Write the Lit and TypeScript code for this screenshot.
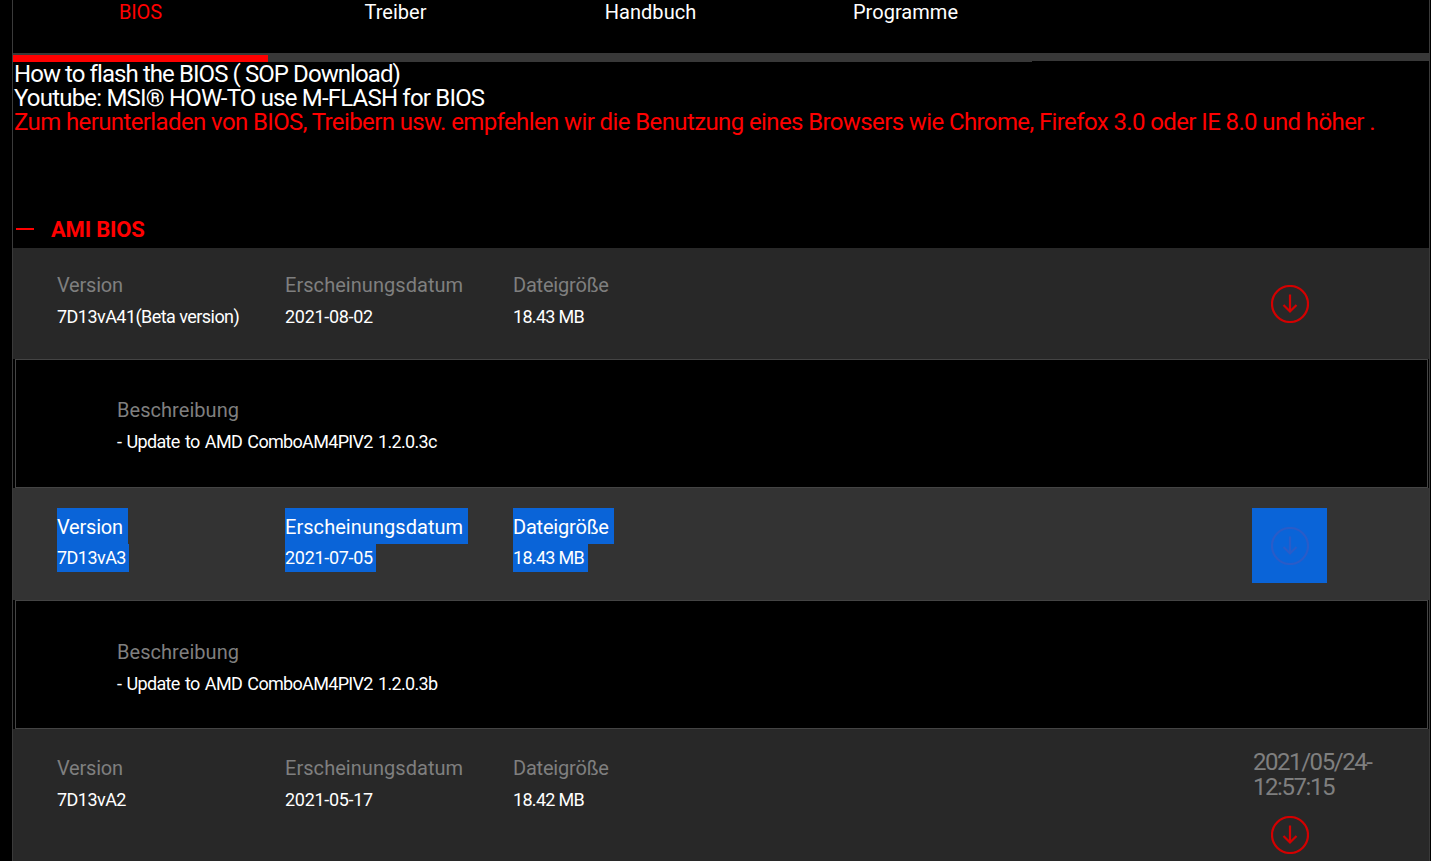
import { LitElement, html, css } from "lit";
import { customElement } from "lit/decorators.js";

const icon = html`<svg class="ico" viewBox="0 0 38 38" width="38" height="38" fill="none" stroke="currentColor" stroke-width="2.2"><circle cx="19" cy="19" r="18"/><path d="M19 9.5V26.5M12.5 20L19 26.5L25.5 20"/></svg>`;

@customElement("app-root")
export class AppRoot extends LitElement {
  static styles = css`
    :host { display: block; height: 861px; overflow: hidden; background: #000; font-family: Roboto, "Liberation Sans", sans-serif; color: #fff; }
    .page { margin-left: 12px; margin-right: 1px; border-left: 1px solid #3a3a3a; border-right: 1px solid #3a3a3a; height: 861px; box-sizing: border-box; }
    .tabs { display: flex; height: 53px; font-size: 20px; line-height: 24px; }
    .tab { width: 255px; text-align: center; letter-spacing: 0.05px; }
    .tab.on { color: #f00; letter-spacing: -0.1px; }
    .track { height: 8px; background: #383838; }
    .track-l { width: 1019px; height: 9px; background: #383838; padding-top: 2px; box-sizing: border-box; }
    .track-r { width: 255px; height: 7px; background: #f00; }
    .notes { font-size: 24px; line-height: 24px; padding: 1px 0 0 1px; height: 149px; box-sizing: border-box; white-space: nowrap; }
    .l1 { letter-spacing: -0.92px; }
    .l2 { letter-spacing: -0.8px; }
    .l3 { letter-spacing: -0.61px; color: #f00; }
    .head { display: flex; align-items: center; height: 38px; color: #f00; font-weight: 700; font-size: 22px; letter-spacing: -0.2px; }
    .dash { width: 18px; height: 2px; background: #f00; margin: 0 17px 0 3px; flex: none; }
    .row { display: flex; background: #282828; box-sizing: border-box; padding: 19px 0 0 44px; height: 111px; }
    .row.sel { background: #333; height: 112px; padding-top: 20px; }
    .row.last { height: 132px; padding-top: 21px; }
    .col { width: 228px; flex: none; }
    .lbl { font-size: 20px; line-height: 36px; color: #7f7f7f; letter-spacing: -0.2px; }
    .col.date .lbl { letter-spacing: 0.05px; }
    .val { font-size: 18px; line-height: 28px; color: #fff; }
    .col.ver .val { letter-spacing: -0.55px; }
    .col.date .val { letter-spacing: -0.3px; }
    .col.size .val { letter-spacing: -0.7px; }
    .sel .lbl { color: #fff; background: #0a64d8; width: fit-content; padding: 2px 5px 0 0; line-height: 34px; }
    .sel .val { color: #fff; background: #0a64d8; width: fit-content; padding-right: 3.5px; }
    .acts { width: 150px; margin-left: 511px; flex: none; }
    .btn { width: 75px; height: 75px; display: flex; align-items: center; justify-content: center; color: #d40000; }
    .first .btn { margin-top: -1px; }
    .sel .btn { background: #0a64d8; color: #2a5cc8; }
    .time { font-size: 24px; line-height: 24.5px; color: #7f7f7f; letter-spacing: -1.45px; width: 130px; margin: 0 0 -2px 1px; }
    .box { margin: 0 1px 0 2px; height: 129px; box-sizing: border-box; border: 1px solid #444; background: #000; padding: 32px 0 0 101px; }
    .box.b2 { padding-top: 33px; }
    .box .lbl { letter-spacing: 0.05px; }
    .box .val { letter-spacing: -0.68px; word-spacing: 1.5px; }
  `;

  private rowT(v: string, d: string, s: string, cls = "", time = false) {
    return html`<div class="row ${cls}">
      <div class="col ver"><div class="lbl">Version</div><div class="val">${v}</div></div>
      <div class="col date"><div class="lbl">Erscheinungsdatum</div><div class="val">${d}</div></div>
      <div class="col size"><div class="lbl">Dateigröße</div><div class="val">${s}</div></div>
      <div class="acts">
        ${time ? html`<div class="time">2021/05/24-12:57:15</div>` : ""}
        <div class="btn">${icon}</div>
      </div>
    </div>`;
  }
  private boxT(t: string, cls = "") {
    return html`<div class="box ${cls}"><div class="lbl">Beschreibung</div><div class="val">${t}</div></div>`;
  }

  render() {
    return html`<div class="page">
      <div class="tabs">
        <div class="tab on">BIOS</div><div class="tab">Treiber</div><div class="tab">Handbuch</div><div class="tab">Programme</div>
      </div>
      <div class="track"><div class="track-l"><div class="track-r"></div></div></div>
      <div class="notes">
        <div class="l1">How to flash the BIOS ( SOP Download)</div>
        <div class="l2">Youtube: MSI® HOW-TO use M-FLASH for BIOS</div>
        <div class="l3">Zum herunterladen von BIOS, Treibern usw. empfehlen wir die Benutzung eines Browsers wie Chrome, Firefox 3.0 oder IE 8.0 und höher .</div>
      </div>
      <div class="head"><span class="dash"></span>AMI BIOS</div>
      ${this.rowT("7D13vA41(Beta version)", "2021-08-02", "18.43 MB", "first")}
      ${this.boxT("- Update to AMD ComboAM4PIV2 1.2.0.3c")}
      ${this.rowT("7D13vA3", "2021-07-05", "18.43 MB", "sel")}
      ${this.boxT("- Update to AMD ComboAM4PIV2 1.2.0.3b", "b2")}
      ${this.rowT("7D13vA2", "2021-05-17", "18.42 MB", "last", true)}
    </div>`;
  }
}
